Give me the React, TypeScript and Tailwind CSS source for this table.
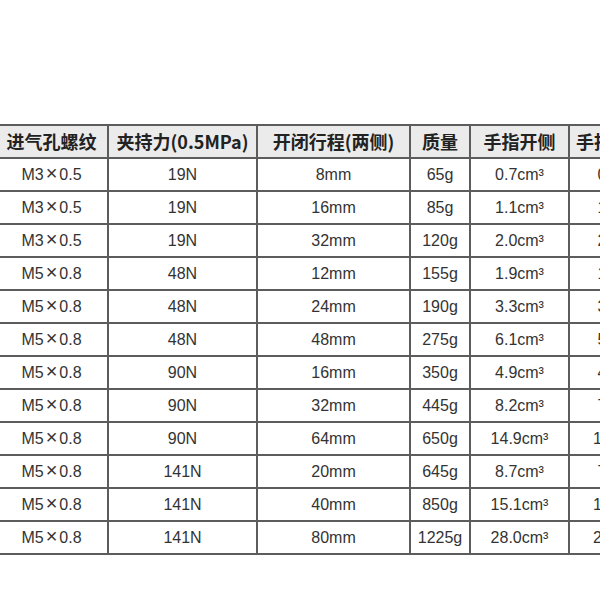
const headers = ["进气孔螺纹", "夹持力(0.5MPa)", "开闭行程(两侧)", "质量", "手指开侧", "手指闭侧"];

const rows: [string, string, string, string, string, string][] = [
  ["M3|0.5", "19N", "8mm", "65g", "0.7cm³", "0.7cm³"],
  ["M3|0.5", "19N", "16mm", "85g", "1.1cm³", "1.1cm³"],
  ["M3|0.5", "19N", "32mm", "120g", "2.0cm³", "2.0cm³"],
  ["M5|0.8", "48N", "12mm", "155g", "1.9cm³", "1.9cm³"],
  ["M5|0.8", "48N", "24mm", "190g", "3.3cm³", "3.3cm³"],
  ["M5|0.8", "48N", "48mm", "275g", "6.1cm³", "5.5cm³"],
  ["M5|0.8", "90N", "16mm", "350g", "4.9cm³", "4.3cm³"],
  ["M5|0.8", "90N", "32mm", "445g", "8.2cm³", "7.4cm³"],
  ["M5|0.8", "90N", "64mm", "650g", "14.9cm³", "13.4cm³"],
  ["M5|0.8", "141N", "20mm", "645g", "8.7cm³", "7.8cm³"],
  ["M5|0.8", "141N", "40mm", "850g", "15.1cm³", "13.6cm³"],
  ["M5|0.8", "141N", "80mm", "1225g", "28.0cm³", "25.2cm³"],
];

function Thread({ value }: { value: string }) {
  const [a, b] = value.split("|");
  return (
    <span>
      {a}
      <span className="mx-[2px] text-[20px] font-light leading-none">×</span>
      {b}
    </span>
  );
}

export default function App() {
  return (
    <div
      className="w-[600px] h-[600px] overflow-hidden bg-white pt-[124px]"
      style={{ fontFamily: '"Liberation Sans", "Noto Sans CJK SC", sans-serif' }}
    >
      <table className="-ml-1 w-[659px] table-fixed border-collapse text-[#333]">
        <colgroup>
          <col className="w-[112px]" />
          <col className="w-[149px]" />
          <col className="w-[153px]" />
          <col className="w-[60px]" />
          <col className="w-[99px]" />
          <col className="w-[86px]" />
        </colgroup>
        <thead>
          <tr className="h-[33px] bg-[#ebebeb]">
            {headers.map((h, i) => (
              <th
                key={h}
                className={`border-2 border-[#5c5c5c] whitespace-nowrap p-0 text-center text-[18px] font-bold text-[#222] ${i === 0 ? "border-l-0" : ""}`}
                style={{ fontFamily: '"Noto Sans CJK SC", "Liberation Sans", sans-serif' }}
              >
                {h}
              </th>
            ))}
          </tr>
        </thead>
        <tbody>
          {rows.map((r, ri) => (
            <tr key={ri} className="h-[33px]">
              {r.map((c, ci) => (
                <td
                  key={ci}
                  className={`border-2 border-[#5c5c5c] whitespace-nowrap p-0 text-center text-[16px] ${ci === 0 ? "border-l-0" : ""} ${ci === 5 ? "pl-5" : ""}`}
                >
                  {ci === 0 ? <Thread value={c} /> : c}
                </td>
              ))}
            </tr>
          ))}
        </tbody>
      </table>
    </div>
  );
}
